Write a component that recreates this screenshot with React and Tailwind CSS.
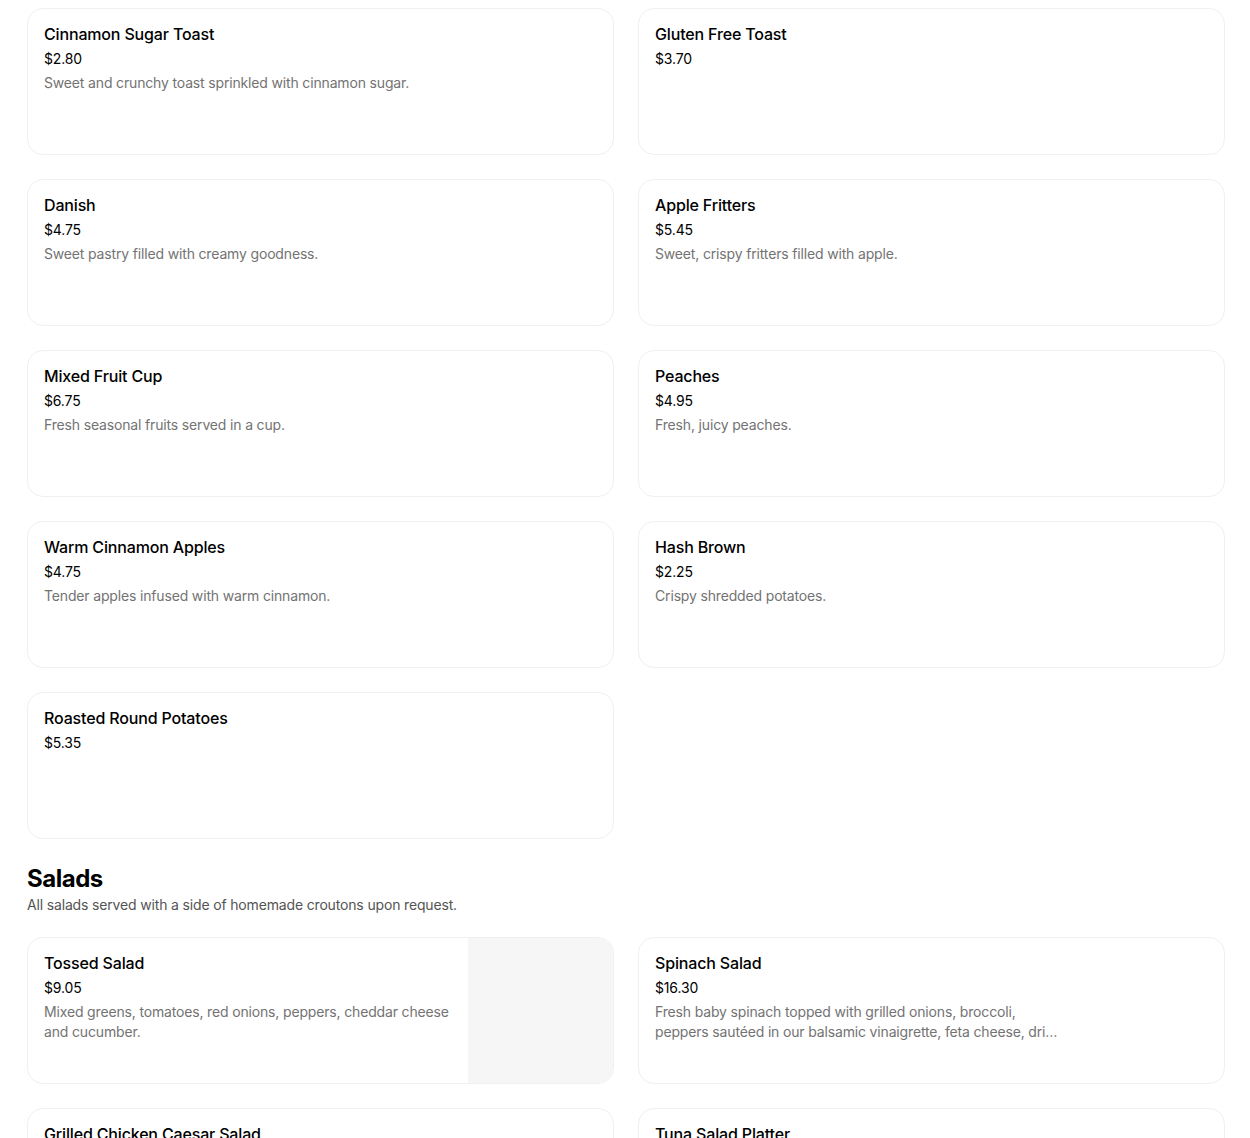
const SIDES = [
  { name: "Cinnamon Sugar Toast", price: "$2.80", desc: "Sweet and crunchy toast sprinkled with cinnamon sugar." },
  { name: "Gluten Free Toast", price: "$3.70" },
  { name: "Danish", price: "$4.75", desc: "Sweet pastry filled with creamy goodness." },
  { name: "Apple Fritters", price: "$5.45", desc: "Sweet, crispy fritters filled with apple." },
  { name: "Mixed Fruit Cup", price: "$6.75", desc: "Fresh seasonal fruits served in a cup." },
  { name: "Peaches", price: "$4.95", desc: "Fresh, juicy peaches." },
  { name: "Warm Cinnamon Apples", price: "$4.75", desc: "Tender apples infused with warm cinnamon." },
  { name: "Hash Brown", price: "$2.25", desc: "Crispy shredded potatoes." },
  { name: "Roasted Round Potatoes", price: "$5.35" },
];

const SALADS = [
  {
    name: "Tossed Salad",
    price: "$9.05",
    desc: "Mixed greens, tomatoes, red onions, peppers, cheddar cheese and cucumber.",
    image: true,
  },
  {
    name: "Spinach Salad",
    price: "$16.30",
    desc: "Fresh baby spinach topped with grilled onions, broccoli, peppers sautéed in our balsamic vinaigrette, feta cheese, dried cranberries and walnuts.",
  },
  { name: "Grilled Chicken Caesar Salad", price: "$14.25", desc: "Romaine lettuce, parmesan cheese and croutons." },
  { name: "Tuna Salad Platter", price: "$13.50", desc: "Tuna salad served over mixed greens." },
];

function ItemCard({ item }) {
  return (
    <div className="flex h-[147px] overflow-hidden rounded-2xl border border-[#f0f0f0] bg-white">
      <div className="min-w-0 flex-1 px-4 pt-[15px]">
        <div className="text-[16px] font-medium leading-5 text-[#000]">{item.name}</div>
        <div className="mt-[5px] text-[14px] leading-5 text-[#000]">{item.price}</div>
        {item.desc && (
          <div className="mt-1 line-clamp-2 max-w-[410px] text-[14px] leading-5 text-[#737373]">{item.desc}</div>
        )}
      </div>
      {item.image && <div className="w-[145px] shrink-0 bg-[#f6f6f6]" />}
    </div>
  );
}

export default function App() {
  return (
    <div className="min-h-screen bg-white pl-[27px] pr-[25px] pt-2 font-['Inter',sans-serif] tracking-[-0.01em]">
      <div className="grid grid-cols-2 gap-x-6 gap-y-6">
        {SIDES.map((item) => (
          <ItemCard key={item.name} item={item} />
        ))}
      </div>

      <div className="pt-[26px] pb-[22px]">
        <h2 className="text-[24px] font-bold leading-7 tracking-[-0.02em] text-[#000]">Salads</h2>
        <p className="mt-[2px] text-[14px] leading-5 text-[#545454]">
          All salads served with a side of homemade croutons upon request.
        </p>
      </div>

      <div className="grid grid-cols-2 gap-x-6 gap-y-6 pb-10">
        {SALADS.map((item) => (
          <ItemCard key={item.name} item={item} />
        ))}
      </div>
    </div>
  );
}
